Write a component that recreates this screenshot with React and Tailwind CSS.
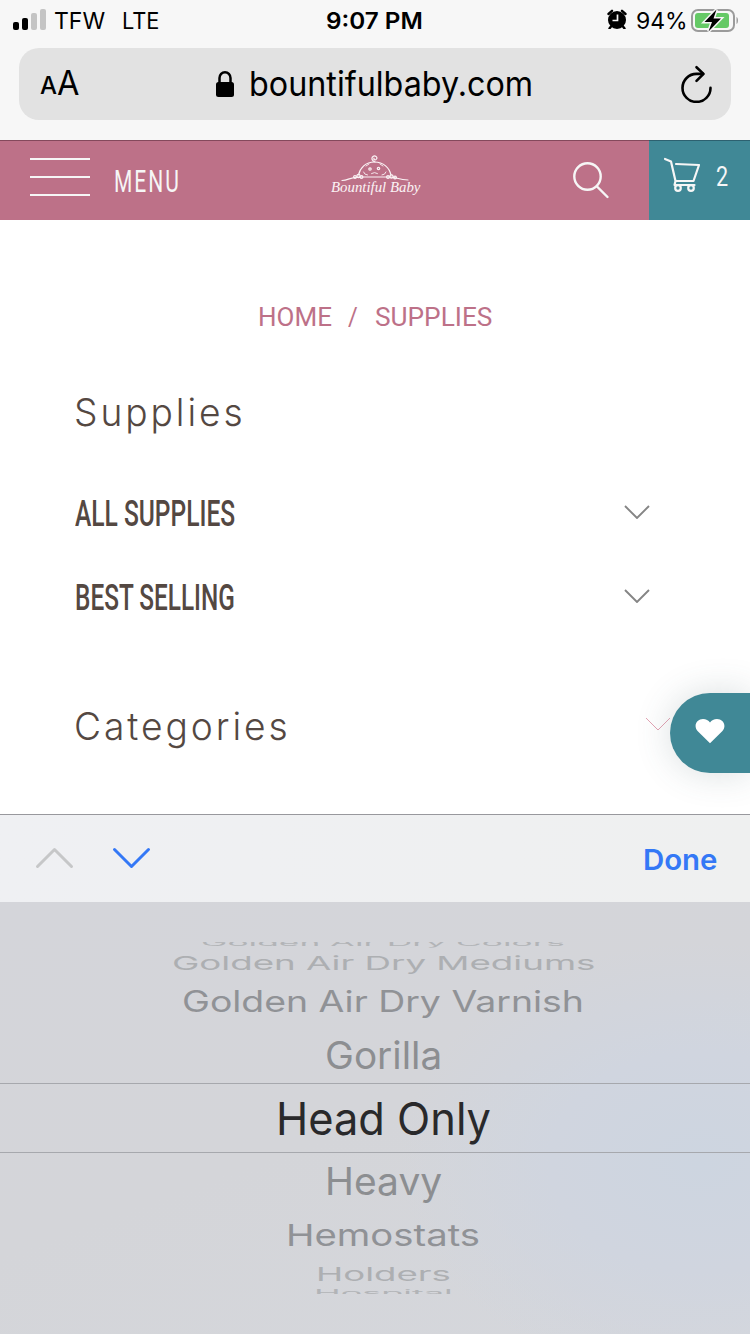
import React, { useLayoutEffect, useRef, useState } from "react";

// Stretches a single line of text to a given width, and squashes it by `sy`.
function Fit({ width, sy = 1, className = "", children }) {
  const ref = useRef(null);
  const [sx, setSx] = useState(1);
  useLayoutEffect(() => {
    if (ref.current) setSx(width / ref.current.offsetWidth);
  }, [width]);
  return (
    <span className="block shrink-0" style={{ width }}>
      <span
        ref={ref}
        className={"inline-block origin-left whitespace-nowrap align-top " + className}
        style={{ transform: `scale(${sx}, ${sy})` }}
      >
        {children}
      </span>
    </span>
  );
}

function StatusBar() {
  return (
    <div className="flex h-[42px] items-center text-[23px] leading-[42px] text-black">
      <div className="flex w-[326px] items-center pl-[13px]">
        <div className="mb-[3px] flex h-[21px] items-end gap-[3px]">
          <i className="h-2 w-1.5 rounded-[2px] bg-black" />
          <i className="h-3 w-1.5 rounded-[2px] bg-black" />
          <i className="h-[17px] w-1.5 rounded-[2px] bg-[#c4c4c4]" />
          <i className="h-[21px] w-1.5 rounded-[2px] bg-[#c4c4c4]" />
        </div>
        <div className="flex gap-[17px] pl-[8px]">
          <Fit width={51}>TFW</Fit>
          <Fit width={37}>LTE</Fit>
        </div>
      </div>
      <div className="w-[281px]">
        <Fit width={97} className="font-semibold">9:07 PM</Fit>
      </div>
      <svg className="mb-1 h-5 w-[20px] shrink-0" viewBox="0 0 20 20">
        <circle cx="10" cy="11" r="9" />
        <path d="M1.500 5 5 1.800M15 1.800 18.500 5M4 17.500l-1.500 2M16 17.500l1.500 2" stroke="#000" strokeWidth="2.400" strokeLinecap="round" />
        <path d="M10.500 5.500v6H5.500" fill="none" stroke="#f7f7f7" strokeWidth="1.700" />
      </svg>
      <div className="pl-[9px]">
        <Fit width={52}>94%</Fit>
      </div>
      <svg className="ml-[1px] mb-[3px] h-[26px] w-[50px] shrink-0" viewBox="0 0 50 26">
        <rect x="3" y="3" width="42" height="21" rx="6" fill="none" stroke="#9b9b9b" strokeWidth="2" />
        <rect x="6" y="6" width="34" height="15" rx="3" fill="#65c966" />
        <path d="M47.500 10c2 .8 2 6.200 0 7z" fill="#9b9b9b" />
        <path d="M27.500 2.500 15.500 15h7.500l-3.500 9.500L32 11.500h-7.500z" fill="#000" stroke="#f7f7f7" strokeWidth="3" paintOrder="stroke" />
      </svg>
    </div>
  );
}

function AddressBar() {
  return (
    <div className="mx-[19px] mt-[6px] flex h-[72px] items-center rounded-[20px] bg-[#e2e2e2] pl-[21px] text-black">
      <div className="flex w-[175px] items-start">
        <Fit width={17} className="pt-[4px] text-[24px] font-medium leading-[72px]">A</Fit>
        <Fit width={22} className="pt-[1px] text-[34px] leading-[72px]">A</Fit>
      </div>
      <svg className="h-7 w-5 shrink-0" viewBox="0 0 20 28">
        <rect x="1" y="12" width="18" height="15" rx="2.500" />
        <path d="M4.500 13V8a5.500 5.800 0 0 1 11 0v5" fill="none" stroke="#000" strokeWidth="2.500" />
      </svg>
      <div className="w-[445px] pl-[14px]">
        <Fit width={284} className="text-[34px] leading-[72px]">bountifulbaby.com</Fit>
      </div>
      <svg className="h-[38px] w-8 shrink-0" viewBox="0 0 32 38" fill="none" stroke="#000" strokeWidth="2.600" strokeLinecap="round" strokeLinejoin="round">
        <path d="M23 8.900H16.500a14 14 0 1 0 14 14" />
        <path d="m16.500 2.200 7 6.700-7 7" />
      </svg>
    </div>
  );
}

function Logo() {
  return (
    <div className="flex w-[90px] flex-col items-center text-[#fbf3f5]">
      <svg className="h-[27px] w-[68px]" viewBox="0 0 68 27" fill="none" stroke="currentColor" strokeWidth="1.200" strokeLinecap="round">
        <path d="M1 25.500c6 0 9-3.500 17-3.500h31c6 0 9 3 18 3" />
        <path d="M17.500 20c1.500-7 7-13 16-13s15 6 16.500 13" />
        <path d="M34 7c-3-1-4-4-2-5.500s5 .5 3.500 2.500-3 .5-2.500-.8" />
        <path d="M30.500 18.500q3-2 6 0M22.500 17q1 3 4 3M45 17q-1 3-4 3M25 11l3-2M42 11l-3-2" strokeWidth=".9" />
        <circle cx="29" cy="14" r="1.200" />
        <circle cx="37.500" cy="13.500" r="1.200" />
        <circle cx="14" cy="22" r="1.400" />
        <circle cx="17.500" cy="21" r="1.600" />
        <circle cx="20.500" cy="22" r="1.400" />
        <circle cx="47" cy="22" r="1.400" />
        <circle cx="50.500" cy="21.500" r="1.600" />
        <circle cx="54" cy="22.500" r="1.400" />
      </svg>
      <Fit width={89} className="-mt-[2px] font-['Liberation_Serif',serif] text-[14px] italic leading-[15px]">
        Bountiful Baby
      </Fit>
    </div>
  );
}

function SiteHeader() {
  return (
    <header className="flex h-20 border-t border-[#84495c] bg-[#bd7188]">
      <div className="flex w-[330px] pl-[30px] pt-[17px]">
        <div className="flex h-[38px] w-[60px] flex-col justify-between">
          <i className="h-0.5 bg-[#f6f6f6]" />
          <i className="h-0.5 bg-[#f6f6f6]" />
          <i className="h-0.5 bg-[#f6f6f6]" />
        </div>
        <div className="pl-[24px] pt-[3px] font-['Roboto',sans-serif] text-[#f6f6f6]">
          <Fit width={67} className="text-[32px] leading-[40px] tracking-[3px]">MENU</Fit>
        </div>
      </div>
      <div className="w-[243px] pt-[14px]">
        <Logo />
      </div>
      <div className="w-[76px] pt-[20px]">
        <svg className="h-[38px] w-[37px]" viewBox="0 0 37 38" fill="none" stroke="#f6f6f6" strokeWidth="2.400" strokeLinecap="round">
          <circle cx="14.500" cy="15.500" r="13.200" />
          <path d="m24 25.500 10.500 10.500" />
        </svg>
      </div>
      <div className="-mt-px flex w-[101px] border-t border-[#2d6170] bg-[#408896] pl-[14px] pt-[15px]">
        <svg className="mt-[1px] h-[36px] w-[38px] shrink-0" viewBox="0 0 38 36" fill="none" stroke="#f6f6f6" strokeWidth="2.200" strokeLinecap="round" strokeLinejoin="round">
          <path d="m2 2 6 2.500 4.500 19.500h18L36 8 13 7M12.500 24l-1 4h20" />
          <circle cx="15" cy="31" r="2.800" />
          <circle cx="28" cy="31" r="2.800" />
        </svg>
        <div className="pl-[15px] pt-[1px] font-['Roboto',sans-serif] text-[#f6f6f6]">
          <Fit width={12} className="text-[27px] leading-[40px]">2</Fit>
        </div>
      </div>
    </header>
  );
}

function Chevron({ className }) {
  return (
    <svg className={"h-[14px] w-[26px] " + className} viewBox="0 0 26 14" fill="none" stroke="currentColor">
      <path d="M1 1l12 12L25 1" />
    </svg>
  );
}

function FilterRow({ label, width }) {
  return (
    <div className="flex h-[84px] items-center justify-between pr-[100px]">
      <Fit width={width} className="font-['Roboto',sans-serif] text-[37px] font-medium leading-[84px]">{label}</Fit>
      <Chevron className="mb-[5px] stroke-[1.9] text-[#858585]" />
    </div>
  );
}

function Content() {
  return (
    <main className="h-[594px] bg-white text-[#544842]">
      <nav className="flex pl-[258px] pt-[77px] font-['Roboto',sans-serif] text-[26px] leading-[40px] text-[#bd7188]">
        <Fit width={74}>HOME</Fit>
        <span className="pl-[16px]"><Fit width={10}>/</Fit></span>
        <span className="pl-[17px]"><Fit width={117}>SUPPLIES</Fit></span>
      </nav>
      <div className="pl-[74px]">
        <h1 className="pt-[45px] leading-[60px]">
          <Fit width={172} className="text-[38px] font-light tracking-[3px]">Supplies</Fit>
        </h1>
        <div className="pl-px pt-[30px]">
          <FilterRow label="ALL SUPPLIES" width={160} />
          <FilterRow label="BEST SELLING" width={160} />
        </div>
        <div className="flex items-start justify-between pr-[79px] pt-[56px]">
          <h2 className="leading-[60px]">
            <Fit width={217} className="text-[38px] font-light tracking-[3px]">Categories</Fit>
          </h2>
          <Chevron className="mt-[21px] stroke-1 text-[#e3a3b3]" />
        </div>
      </div>
    </main>
  );
}

function PickerToolbar() {
  return (
    <div className="flex h-[88px] items-center border-t border-[#98989d] bg-linear-to-r from-[#eff0f3] to-[#eff0f0] pl-[35px]">
      <svg className="mb-[2px] h-[24px] w-10" viewBox="0 0 40 24" fill="none" stroke="#c6c7c8" strokeWidth="3" strokeLinecap="round" strokeLinejoin="round">
        <path d="M2.500 20.500 19.500 3.500 36.500 20.500" />
      </svg>
      <svg className="ml-[36px] mb-[1px] h-[24px] w-[41px]" viewBox="0 0 40 24" fill="none" stroke="#3478f6" strokeWidth="3" strokeLinecap="round" strokeLinejoin="round">
        <path d="M3 3.500 20 20.500 37 3.500" />
      </svg>
      <div className="pl-[491px] pt-[2px]">
        <Fit width={75} className="text-[29px] font-semibold leading-[40px] text-[#3478f6]">Done</Fit>
      </div>
    </div>
  );
}

function WheelRow({ label, width, sy, className }) {
  return (
    <div className={"flex items-center justify-center pl-[16px] text-[45px] leading-[60px] " + className}>
      <Fit width={width} sy={sy}>{label}</Fit>
    </div>
  );
}

function Wheel() {
  return (
    <div className="flex h-[432px] flex-col overflow-hidden bg-[radial-gradient(ellipse_300px_220px_at_700px_260px,#cdd5e0_0%,#d0d5df_50%,transparent_100%),linear-gradient(160deg,#d4d5da_0%,#d4d5d9_50%,#d5d7dc_100%)] pt-[40px]">
      <div className="h-[7px] overflow-hidden">
        <WheelRow label="Golden Air Dry Colors" width={364} sy={0.19} className="h-px text-[#b2b4b7]" />
      </div>
      <WheelRow label="Golden Air Dry Mediums" width={423} sy={0.42} className="h-[28px] text-[#adafb2]" />
      <WheelRow label="Golden Air Dry Varnish" width={402} sy={0.65} className="h-[50px] text-[#909296]" />
      <WheelRow label="Gorilla" width={117} sy={0.84} className="h-[56px] pt-[2px] text-[#8c8e91]" />
      <WheelRow label="Head Only" width={215} sy={1} className="h-[70px] border-y border-[#a6a8ad] pt-[2px] text-[#29292b]" />
      <WheelRow label="Heavy" width={117} sy={0.84} className="h-[56px] pt-[2px] text-[#8c8e91]" />
      <WheelRow label="Hemostats" width={194} sy={0.66} className="h-[52px] text-[#909296]" />
      <WheelRow label="Holders" width={135} sy={0.41} className="h-[25px] text-[#adafb2]" />
      <div className="h-[8px] overflow-hidden">
        <WheelRow label="Hospital" width={139} sy={0.19} className="h-[14px] text-[#b2b4b7]" />
      </div>
    </div>
  );
}

export default function App() {
  return (
    <div className="relative h-[1334px] w-[750px] overflow-hidden bg-[#f7f7f7] font-['Inter',sans-serif]">
      <StatusBar />
      <AddressBar />
      <div className="h-5" />
      <SiteHeader />
      <Content />
      <PickerToolbar />
      <Wheel />
      <button className="absolute right-0 top-[693px] flex h-20 w-20 items-center justify-center rounded-l-full bg-[#408896] shadow-[0_0_36px_rgba(64,90,96,0.2)]">
        <svg className="mb-[4px] h-[26px] w-[30px]" viewBox="0 0 30 26" fill="#fff">
          <path d="M15 25.200 2.800 13.300C-2.200 7.500 2 1 8 1c3 0 5.500 1.500 7 3.500C16.500 2.500 19 1 22 1c6 0 10.200 6.500 5.200 12.300z" />
        </svg>
      </button>
    </div>
  );
}
